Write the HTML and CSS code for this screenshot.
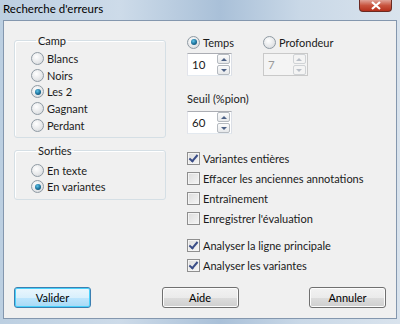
FILE: index.html
```html
<!DOCTYPE html>
<html lang="fr">
<head>
<meta charset="UTF-8">
<title>Recherche d'erreurs</title>
<link rel="stylesheet" href="styles.css">
</head>
<body>

<div class="window">
    <div class="titlebar">
        <span class="title">Recherche d'erreurs</span>
        <span class="close">
            <svg width="12" height="9" viewBox="0 0 12 9"><path d="M2 1 L10 8 M10 1 L2 8" stroke="#fff" stroke-width="2.2" fill="none"/></svg>
        </span>
    </div>

    <div class="client">
        <div class="main">
            <div class="left">
                <fieldset class="group camp">
                    <legend>Camp</legend>
                    <div class="row"><span class="radio"></span>Blancs</div>
                    <div class="row"><span class="radio"></span>Noirs</div>
                    <div class="row"><span class="radio on"></span>Les 2</div>
                    <div class="row"><span class="radio"></span>Gagnant</div>
                    <div class="row"><span class="radio"></span>Perdant</div>
                </fieldset>
                <fieldset class="group sorties">
                    <legend>Sorties</legend>
                    <div class="row"><span class="radio"></span>En texte</div>
                    <div class="row"><span class="radio on"></span>En variantes</div>
                </fieldset>
            </div>

            <div class="right">
                <div class="modes">
                    <div class="mode">
                        <div class="row"><span class="radio on"></span>Temps</div>
                        <div class="spin">
                            <span class="value">10</span>
                            <span class="arrows">
                                <span class="arrow up"></span>
                                <span class="arrow down"></span>
                            </span>
                        </div>
                    </div>
                    <div class="mode">
                        <div class="row"><span class="radio"></span>Profondeur</div>
                        <div class="spin disabled">
                            <span class="value">7</span>
                            <span class="arrows">
                                <span class="arrow up"></span>
                                <span class="arrow down"></span>
                            </span>
                        </div>
                    </div>
                </div>

                <div class="label">Seuil (%pion)</div>
                <div class="spin">
                    <span class="value">60</span>
                    <span class="arrows">
                        <span class="arrow up"></span>
                        <span class="arrow down"></span>
                    </span>
                </div>

                <div class="checks">
                    <div class="crow"><span class="check on"></span>Variantes entières</div>
                    <div class="crow"><span class="check"></span>Effacer les anciennes annotations</div>
                    <div class="crow"><span class="check"></span>Entraînement</div>
                    <div class="crow"><span class="check"></span>Enregistrer l'évaluation</div>
                </div>
                <div class="checks second">
                    <div class="crow"><span class="check on"></span>Analyser la ligne principale</div>
                    <div class="crow"><span class="check on"></span>Analyser les variantes</div>
                </div>
            </div>
        </div>

        <div class="buttons">
            <button class="btn default">Valider</button>
            <button class="btn">Aide</button>
            <button class="btn">Annuler</button>
        </div>
    </div>
</div>

</body>
</html>
```

FILE: styles.css
```css
body {
    margin: 0;
    width: 400px;
    height: 324px;
    overflow: hidden;
    font-family: Lato, "Noto Sans", sans-serif;
    font-size: 11px;
    color: #1a1a1a;
}
.window {
    width: 400px;
    height: 324px;
    background: linear-gradient(90deg, #bccfe1 0%, #cddbe9 30%, #a9c0d8 55%, #c9d8e7 75%, #d9e3ed 100%);
}
.titlebar {
    height: 20px;
    display: flex;
    align-items: flex-start;
    justify-content: space-between;
}
.title {
    padding: 2px 0 0 3px;
    line-height: 14px;
    font-size: 11.5px;
    color: #000;
}
.close {
    width: 31px;
    height: 11px;
    margin-right: 8px;
    border: 1px solid #6b2a22;
    border-top: none;
    border-radius: 0 0 4px 4px;
    background: linear-gradient(#e0a398, #c8543f 50%, #b5301c);
    display: flex;
    align-items: center;
    justify-content: center;
}

.client {
    margin-left: 3px;
    width: 392px;
    height: 297px;
    border: 1px solid #8497ae;
    background: #f0f0f0;
    display: flex;
    flex-direction: column;
}
.main {
    flex: 1;
    display: flex;
    padding-left: 10px;
}
.left {
    width: 152px;
}
.group {
    margin: 0;
    padding: 0 0 0 16px;
    border: 1px solid #d5dfe5;
    border-radius: 3px;
    box-shadow: inset 1px 1px 0 #fff;
}
.group legend {
    margin-left: 5px;
    padding: 0 2px;
    line-height: 15px;
}
.camp {
    margin-top: 12px;
    padding-top: 2px;
    padding-bottom: 3px;
}
.camp .row {
    height: 16.75px;
}
.sorties {
    margin-top: 5px;
    padding-top: 5px;
    padding-bottom: 4px;
}
.sorties .row {
    height: 16px;
}
.row {
    display: flex;
    align-items: center;
    gap: 3px;
}
.radio {
    width: 11px;
    height: 11px;
    border: 1px solid #8f9aa3;
    border-radius: 50%;
    background: radial-gradient(circle at 40% 35%, #ffffff, #e4e6e8 60%, #cfd3d7);
    display: flex;
    align-items: center;
    justify-content: center;
}
.radio.on::after {
    content: "";
    width: 6px;
    height: 6px;
    border-radius: 50%;
    background: radial-gradient(circle at 40% 35%, #5fc3e8, #1a6f99 55%, #0d3e5c);
}

.right {
    margin-left: 21px;
    padding-top: 14px;
}
.modes {
    display: flex;
    gap: 29px;
}
.mode .row {
    height: 14px;
}
.spin {
    margin-top: 4px;
    width: 43px;
    height: 21px;
    border: 1px solid #abadb3;
    border-color: #abadb3 #dbdfe6 #e3e9ef #e2e3ea;
    background: #fff;
    display: flex;
    align-items: center;
    justify-content: space-between;
}
.spin .value {
    padding-left: 4px;
    font-size: 11.5px;
}
.arrows {
    width: 13px;
    display: flex;
    flex-direction: column;
    gap: 1px;
    margin-right: 1px;
}
.arrow {
    height: 8px;
    border: 1px solid #b5bac0;
    border-radius: 2px;
    background: linear-gradient(#fbfbfb, #e6e8ea);
    display: flex;
    align-items: center;
    justify-content: center;
}
.arrow::after {
    content: "";
    border-left: 3px solid transparent;
    border-right: 3px solid transparent;
}
.arrow.up::after {
    border-bottom: 3px solid #4d6185;
}
.arrow.down::after {
    border-top: 3px solid #4d6185;
}
.spin.disabled {
    background: #f4f4f4;
    border-color: #c9c9c9;
    color: #9a9a9a;
}
.spin.disabled .arrow {
    border-color: #d0d3d6;
    background: #f4f4f4;
}
.spin.disabled .arrow.up::after {
    border-bottom-color: #b9bfc8;
}
.spin.disabled .arrow.down::after {
    border-top-color: #b9bfc8;
}
.label {
    margin-top: 15px;
    line-height: 15px;
}
.right > .spin {
    margin-top: 5px;
}
.checks {
    margin-top: 14px;
}
.checks.second {
    margin-top: 7px;
}
.crow {
    height: 20px;
    display: flex;
    align-items: center;
    gap: 3px;
}
.check {
    width: 11px;
    height: 11px;
    border: 1px solid #8f8f8f;
    background: linear-gradient(135deg, #dcdcdc, #f6f6f6);
    box-shadow: inset 0 0 0 1px #f4f4f4;
    position: relative;
}
.check.on::after {
    content: "";
    position: absolute;
    left: 3px;
    top: 0px;
    width: 3px;
    height: 7px;
    border-right: 2px solid #3a4d87;
    border-bottom: 2px solid #3a4d87;
    transform: rotate(40deg);
}

.buttons {
    display: flex;
    justify-content: space-between;
    padding: 0 10px 10px;
}
.btn {
    width: 77px;
    height: 21px;
    font: inherit;
    color: #000;
    border: 1px solid #707070;
    border-radius: 3px;
    background: linear-gradient(#f2f2f2, #ebebeb 50%, #dddddd 51%, #cfcfcf);
    box-shadow: inset 0 0 0 1px #fcfcfc;
    padding: 0;
}
.btn.default {
    border-color: #3c7fb1;
    background: linear-gradient(#eaf6fd, #d9f0fc 50%, #bee6fd 51%, #a7d9f5);
    box-shadow: inset 0 0 0 1px #48d1fb;
}
```
